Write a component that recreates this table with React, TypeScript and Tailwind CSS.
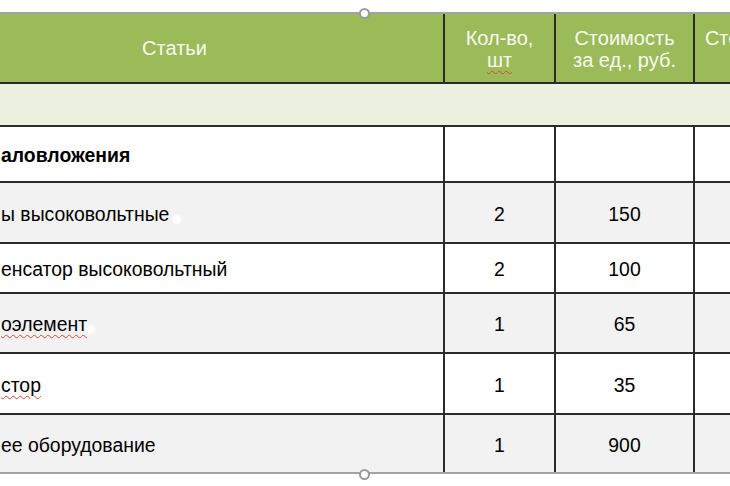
const rows = [
  { name: 'аловложения', qty: '', price: '', bold: true, bg: 'bg-white', h: 'h-[56px]' },
  { name: 'ы высоковольтные', qty: '2', price: '150', bg: 'bg-[#f2f2f2]', h: 'h-[61px]' },
  { name: 'енсатор высоковольтный', qty: '2', price: '100', bg: 'bg-white', h: 'h-[50px]' },
  { name: 'оэлемент', qty: '1', price: '65', bg: 'bg-[#f2f2f2]', h: 'h-[60px]', wavy: true },
  { name: 'стор', qty: '1', price: '35', bg: 'bg-white', h: 'h-[61px]', wavy: true },
  { name: 'ее оборудование', qty: '1', price: '900', bg: 'bg-[#f2f2f2]', h: 'h-[59px]', last: true },
];

function Handle({ top }: { top: string }) {
  return (
    <div
      className={`absolute left-[359px] ${top} w-[11px] h-[11px] rounded-full bg-white border-2 border-[#9a9a9a]`}
    />
  );
}

export default function App() {
  return (
    <div className="relative w-[730px] h-[486px] overflow-hidden bg-white font-['Liberation_Sans',Arial,sans-serif] text-[20px] text-black">
      <div className="mt-[12px] w-[820px] border-t-2 border-[#a3a3a3]">
        {/* header */}
        <div className="flex h-[70px] bg-[#9bbb59] text-[#f7f9f2] leading-[22px] border-b-2 border-[#2b2b2b]">
          <div className="w-[445px] border-r-2 border-[#2b2b2b] flex items-center justify-center pr-[94px]">
            Статьи
          </div>
          <div className="w-[111px] border-r-2 border-[#2b2b2b] flex flex-col items-center justify-center pt-[1px]">
            <span>Кол-во,</span>
            <span className="underline decoration-wavy decoration-[#e0452f] decoration-1 underline-offset-[3px]">шт</span>
          </div>
          <div className="w-[139px] border-r-2 border-[#2b2b2b] flex flex-col items-center justify-center pt-[1px]">
            <span>Стоимость</span>
            <span>за ед., руб.</span>
          </div>
          <div className="w-[116px] flex flex-col items-center justify-center pt-[1px] pl-[4px] whitespace-nowrap">
            <span>Стоимость</span>
            <span>руб.</span>
          </div>
        </div>

        {/* section band */}
        <div className="h-[43px] bg-[#ebf1de] border-b-2 border-[#2b2b2b]" />

        {rows.map((r, i) => (
          <div
            key={i}
            className={`flex text-[19.4px] ${r.bg} ${r.h} border-b-2 ${r.last ? 'border-[#a3a3a3]' : 'border-[#2b2b2b]'}`}
          >
            <div className="relative w-[445px] border-r-2 border-[#2b2b2b] flex items-center pl-[1px] pt-[4px] whitespace-nowrap">
              <span
                className={`${r.bold ? 'font-bold' : ''} ${r.wavy ? 'underline decoration-wavy decoration-[#e0452f] decoration-1 underline-offset-[3px]' : ''}`}
              >
                {r.name}
              </span>
              {i === 1 && <span className="absolute left-[172px] top-[32px] w-[9px] h-[9px] rounded-full bg-white blur-[1px]" />}
              {i === 3 && <span className="absolute left-[86px] top-[31px] w-[9px] h-[9px] rounded-full bg-white blur-[1px]" />}
            </div>
            <div className="w-[111px] border-r-2 border-[#2b2b2b] flex items-center justify-center pt-[4px]">{r.qty}</div>
            <div className="w-[139px] border-r-2 border-[#2b2b2b] flex items-center justify-center pt-[4px]">{r.price}</div>
            <div className="w-[116px]" />
          </div>
        ))}
      </div>
      <Handle top="top-[8px]" />
      <Handle top="top-[469px]" />
    </div>
  );
}
